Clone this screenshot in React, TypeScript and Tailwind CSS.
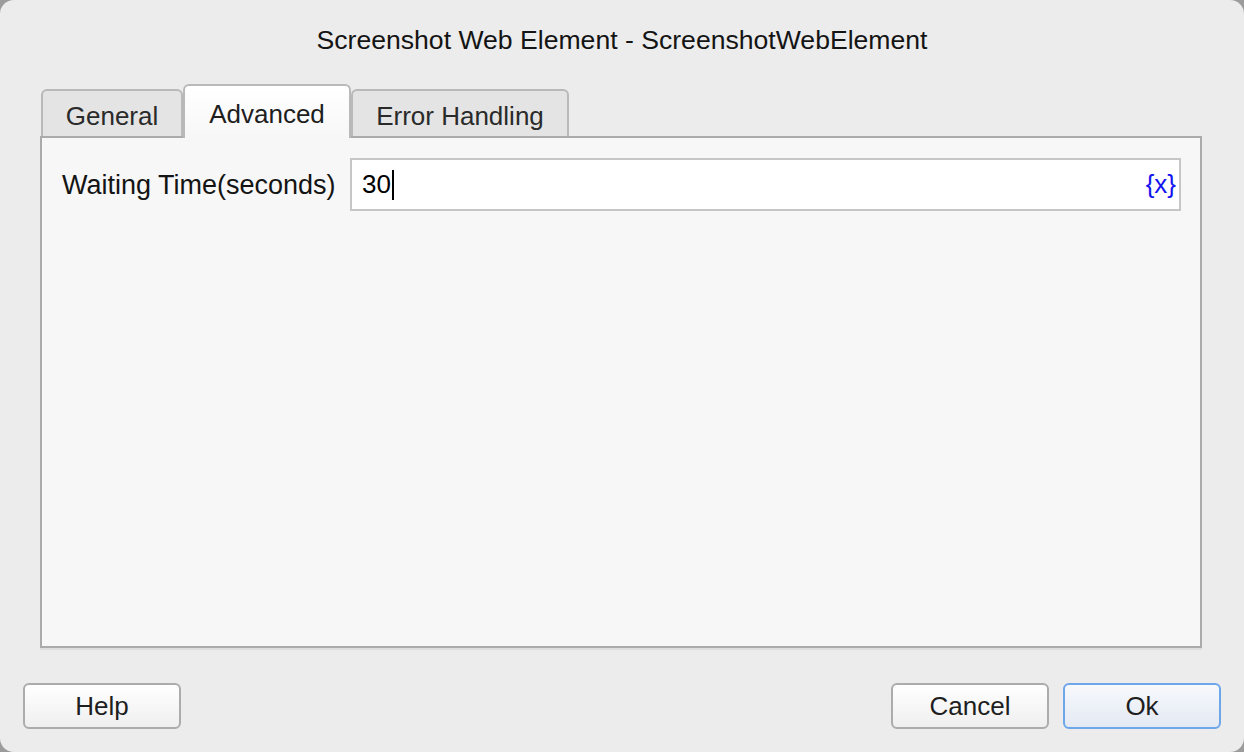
import React from 'react';

const font = "font-['Liberation_Sans','Helvetica',sans-serif]";

const Tab = ({ label, active, width }: { label: string; active?: boolean; width: string }) => (
  <div
    className={
      active
        ? `${width} h-[54px] -mb-[2px] relative z-10 flex items-start justify-center pt-[13px] rounded-t-[6px] border-2 border-b-0 border-[#b9b9b9] bg-gradient-to-b from-white to-[#f7f7f7] text-[#1e1e1e]`
        : `${width} h-[47px] flex items-start justify-center pt-[10px] rounded-t-[6px] border-2 border-b-0 border-[#b9b9b9] bg-[#e4e4e4] text-[#2a2a2a]`
    }
  >
    <span className="text-[26px] leading-[30px]">{label}</span>
  </div>
);

const Button = ({ label, primary }: { label: string; primary?: boolean }) => (
  <button
    className={
      primary
        ? 'w-[158px] h-[46px] rounded-[6px] border-2 border-[#6ea6ea] bg-gradient-to-b from-[#f7f9fc] to-[#e3e9f3] text-[26px] text-[#1e1e1e]'
        : 'w-[158px] h-[46px] rounded-[6px] border-2 border-[#acacac] bg-gradient-to-b from-white to-[#efefef] text-[26px] text-[#1e1e1e]'
    }
  >
    {label}
  </button>
);

export default function App() {
  return (
    <div className={`w-[1244px] h-[752px] bg-[#9c9c9c] ${font}`}>
      <div className="w-full h-full rounded-[14px] bg-[#ececec] flex flex-col">
        <div className="h-[80px] flex items-center justify-center pt-[1px]">
          <span className="text-[26.6px] text-[#141414]">Screenshot Web Element - ScreenshotWebElement</span>
        </div>

        <div className="mt-[4px] pl-[41px] pr-[42px] flex items-end">
          <Tab label="General" width="w-[142px]" />
          <Tab label="Advanced" active width="w-[168px]" />
          <Tab label="Error Handling" width="w-[218px]" />
        </div>

        <div className="ml-[40px] mr-[42px] h-[512px] border-2 border-[#ababab] bg-[#f7f7f7] shadow-[0_2px_0_#dedede] pt-[20px] pl-[20px] pr-[19px]">
          <div className="flex items-center">
            <span className="w-[288px] shrink-0 text-[27px] text-[#141414] pt-[2px]">Waiting Time(seconds)</span>
            <div className="flex-1 h-[53px] border-2 border-[#c6c6c6] bg-white flex items-center pl-[10px] pr-[3px]">
              <span className="text-[26px] text-black">30</span>
              <span className="w-[2px] h-[30px] bg-black ml-[1px]" />
              <span className="ml-auto text-[26px] text-[#1414f0]">{'{x}'}</span>
            </div>
          </div>
        </div>

        <div className="mt-[35px] px-[23px] flex items-center">
          <Button label="Help" />
          <div className="ml-auto flex gap-[14px]">
            <Button label="Cancel" />
            <Button label="Ok" primary />
          </div>
        </div>
      </div>
    </div>
  );
}
